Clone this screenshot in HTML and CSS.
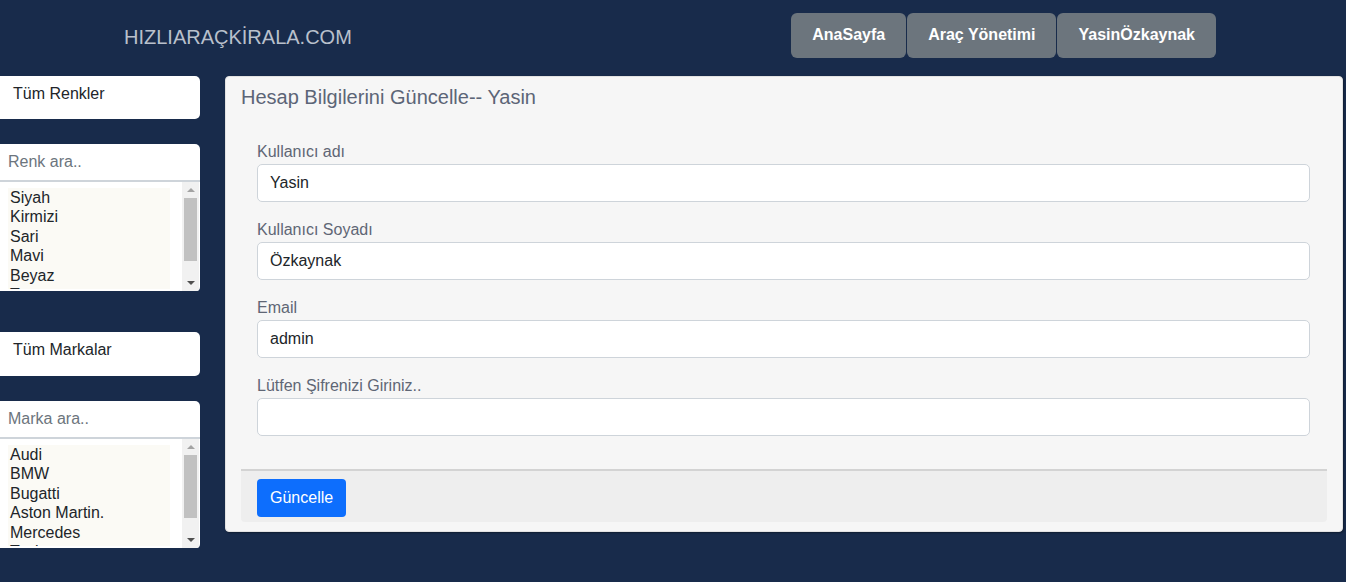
FILE: index.html
```html
<!DOCTYPE html>
<html lang="tr">
<head>
<meta charset="utf-8">
<title>HIZLIARAÇKİRALA.COM</title>
<link rel="stylesheet" href="styles.css">
</head>
<body>
<header class="navbar">
  <div class="brand">HIZLIARAÇKİRALA.COM</div>
  <nav class="nav">
    <a class="nav-btn">AnaSayfa</a>
    <a class="nav-btn">Araç Yönetimi</a>
    <a class="nav-btn">YasinÖzkaynak</a>
  </nav>
</header>
<div class="page">
  <aside class="sidebar">
    <div class="filter">
      <div class="all-box">Tüm Renkler</div>
      <div class="search">Renk ara..</div>
      <div class="listbox">
        <div class="items">
          <div>Siyah</div><div>Kirmizi</div><div>Sari</div><div>Mavi</div><div>Beyaz</div><div>Turuncu</div>
        </div>
        <div class="scrollbar">
          <span class="arrow up"></span>
          <span class="thumb"></span>
          <span class="arrow down"></span>
        </div>
      </div>
    </div>
    <div class="filter filter-second">
      <div class="all-box">Tüm Markalar</div>
      <div class="search">Marka ara..</div>
      <div class="listbox">
        <div class="items">
          <div>Audi</div><div>BMW</div><div>Bugatti</div><div>Aston Martin.</div><div>Mercedes</div><div>Tesla</div>
        </div>
        <div class="scrollbar">
          <span class="arrow up"></span>
          <span class="thumb"></span>
          <span class="arrow down"></span>
        </div>
      </div>
    </div>
  </aside>
  <main class="card">
    <h2 class="card-title">Hesap Bilgilerini Güncelle-- Yasin</h2>
    <form class="card-body">
      <div class="group">
        <label class="label">Kullanıcı adı</label>
        <div class="input">Yasin</div>
      </div>
      <div class="group">
        <label class="label">Kullanıcı Soyadı</label>
        <div class="input">Özkaynak</div>
      </div>
      <div class="group">
        <label class="label">Email</label>
        <div class="input">admin</div>
      </div>
      <div class="group">
        <label class="label">Lütfen Şifrenizi Giriniz..</label>
        <div class="input"></div>
      </div>
    </form>
    <div class="card-footer">
      <button class="btn-primary" type="button">Güncelle</button>
    </div>
  </main>
</div>
</body>
</html>
```

FILE: styles.css
```css
* { box-sizing: border-box; }

body {
  margin: 0;
  background: #182b4b;
  font-family: "Liberation Sans", Arial, sans-serif;
  color: #212529;
  min-height: 582px;
}

.navbar {
  height: 76px;
  display: flex;
  align-items: center;
  padding: 0 130px 6px 124px;
}

.brand {
  font-size: 20px;
  color: #b9c0cc;
  margin-top: 4px;
}

.nav {
  margin-left: auto;
  display: flex;
  gap: 1px;
}

.nav-btn {
  display: flex;
  align-items: center;
  justify-content: center;
  height: 45px;
  padding: 0 21px;
  background: #6c757d;
  color: #fff;
  font-weight: bold;
  font-size: 16px;
  border-radius: 6px;
}

.page {
  display: flex;
  align-items: flex-start;
  gap: 25px;
  padding-right: 3px;
}

.sidebar {
  width: 200px;
  flex: none;
  display: flex;
  flex-direction: column;
  gap: 41px;
}

.all-box {
  background: #fff;
  height: 43px;
  border-radius: 0 5px 5px 0;
  padding: 9px 13px;
  font-size: 16px;
  line-height: 18px;
  color: #212529;
}

.filter-second .all-box {
  height: 44px;
}

.search {
  margin-top: 25px;
  height: 38px;
  background: #fff;
  border-radius: 0 5px 0 0;
  border-bottom: 2px solid #ced4da;
  padding: 8px 8px;
  font-size: 16px;
  line-height: 20px;
  color: #6c757d;
}

.listbox {
  height: 109px;
  background: #fff;
  border-radius: 0 0 4px 0;
  display: flex;
  overflow: hidden;
  padding: 6px 1px 2px 8px;
}

.items {
  width: 162px;
  background: #fbfaf5;
  font-size: 16px;
  line-height: 19.4px;
  overflow: hidden;
  color: #212529;
  padding-left: 2px;
}

.scrollbar {
  margin-left: 12px;
  margin-top: -6px;
  width: 17px;
  height: 109px;
  background: #f1f1f1;
  display: flex;
  flex-direction: column;
  align-items: center;
}

.arrow {
  width: 0;
  height: 0;
  border-left: 4px solid transparent;
  border-right: 4px solid transparent;
}

.arrow.up {
  margin-top: 6px;
  border-bottom: 4px solid #a3a3a3;
}

.arrow.down {
  margin-top: auto;
  margin-bottom: 6px;
  border-top: 4px solid #505050;
}

.thumb {
  margin-top: 6px;
  width: 13px;
  height: 63px;
  background: #c1c1c1;
}

.card {
  flex: 1;
  height: 456px;
  background: #f6f6f6;
  border: 1px solid #e2e2e2;
  border-radius: 4px;
  box-shadow: 1px 1px 2px rgba(0, 0, 0, 0.35);
  padding: 8px 15px 9px;
  display: flex;
  flex-direction: column;
}

.card-title {
  margin: 0;
  font-weight: normal;
  font-size: 20px;
  line-height: 24px;
  color: #5c6577;
}

.card-body {
  padding: 33px 16px 15px;
  margin: 0;
}

.group {
  margin-bottom: 18px;
}

.label {
  display: block;
  font-size: 16px;
  line-height: 20px;
  margin-bottom: 2px;
  color: #5f6675;
}

.input {
  height: 38px;
  background: #fff;
  border: 1px solid #ced4da;
  border-radius: 5px;
  padding: 8px 12px;
  font-size: 16px;
  line-height: 20px;
  color: #212529;
  margin-right: 1px;
}

.card-footer {
  margin-top: auto;
  height: 55px;
  background: #eeeeee;
  border-top: 2px solid #d3d3d3;
  border-radius: 0 0 4px 4px;
  padding: 8px 16px 0;
}

.btn-primary {
  height: 38px;
  padding: 0 13px;
  border: none;
  border-radius: 4px;
  background: #0d6efd;
  color: #fff;
  font-family: "Liberation Sans", Arial, sans-serif;
  font-size: 16px;
}
```
